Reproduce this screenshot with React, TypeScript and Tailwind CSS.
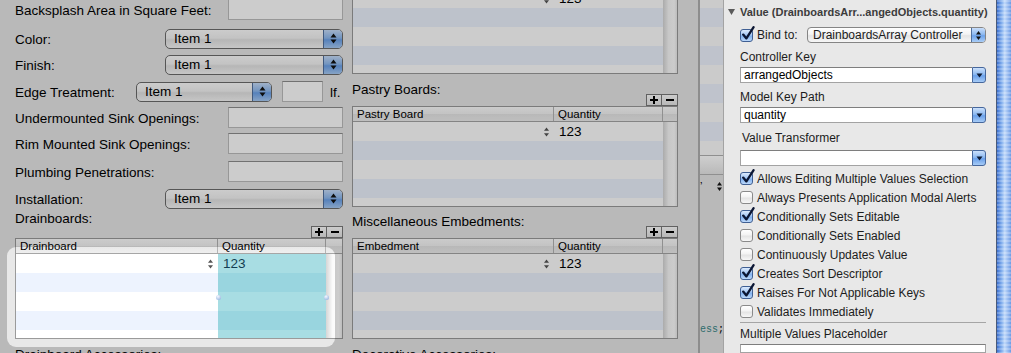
import React from "react";

const SANS = "font-['Liberation_Sans',Arial,sans-serif]";

function UpDown({ small = false }: { small?: boolean }) {
  if (small) {
    return (
      <svg width="5" height="9" viewBox="0 0 5 9">
        <path d="M2.5 0L5 3.5H0Z" fill="#111" />
        <path d="M2.5 9L5 5.5H0Z" fill="#111" />
      </svg>
    );
  }
  return (
    <svg width="7" height="11" viewBox="0 0 7 11">
      <path d="M3.5 0.5L6.5 4.5H0.5Z" fill="#111" />
      <path d="M3.5 10.5L6.5 6.5H0.5Z" fill="#111" />
    </svg>
  );
}

function Stepper() {
  return (
    <svg width="5" height="10" viewBox="0 0 5 10">
      <path d="M2.5 0.5L5 3.8H0Z" fill="#555" />
      <path d="M2.5 9.5L5 6.2H0Z" fill="#555" />
    </svg>
  );
}

function DownArrow() {
  return (
    <svg width="7" height="5" viewBox="0 0 7 5">
      <path d="M0.5 0.5H6.5L3.5 4.5Z" fill="#0d1a33" />
    </svg>
  );
}

function Popup({ width }: { width: string }) {
  return (
    <div
      className={`flex h-[20px] ${width} overflow-hidden rounded-[5px] border border-[#6c6c6c] bg-[linear-gradient(#ffffff,#f4f4f4_45%,#e4e4e4_55%,#f8f8f8)]`}
    >
      <span className="flex-1 pl-[8px] text-[13.5px] leading-[18px] text-black">Item 1</span>
      <span className="flex w-[19px] items-center justify-center border-l border-[#50709e] bg-[linear-gradient(#c8defb,#8fbaf0_45%,#6ca2ea_55%,#a9cdf7)]">
        <UpDown />
      </span>
    </div>
  );
}

function TextField({ width }: { width: string }) {
  return <div className={`${width} h-[21px] border border-[#bdbdbd] border-t-[#8e8e8e] bg-white`} />;
}

function Label({ children }: { children: React.ReactNode }) {
  return (
    <span className="whitespace-nowrap pt-[2px] text-[13.5px] leading-[16px] text-black">{children}</span>
  );
}

function PlusMinus() {
  return (
    <div className="flex h-[12px] self-end">
      <div className="flex w-[16px] items-center justify-center border border-[#7a7a7a] bg-[linear-gradient(#ffffff,#e6e6e6)]">
        <svg width="8" height="8" viewBox="0 0 8 8">
          <path d="M4 0V8M0 4H8" stroke="#000" strokeWidth="2" />
        </svg>
      </div>
      <div className="flex w-[16px] items-center justify-center border border-l-0 border-[#7a7a7a] bg-[linear-gradient(#ffffff,#e6e6e6)]">
        <svg width="8" height="2" viewBox="0 0 8 2">
          <path d="M0 1H8" stroke="#000" strokeWidth="2" />
        </svg>
      </div>
    </div>
  );
}

const ROWS = [0, 1, 2, 3, 4];

function Table({
  col1,
  w1,
  w2,
  selected = false,
  header = true,
}: {
  col1: string;
  w1: string;
  w2: string;
  selected?: boolean;
  header?: boolean;
}) {
  return (
    <div className={`flex flex-col border-x border-b border-[#9a9a9a] ${header ? "border-t" : ""}`}>
      {header && (
        <div className="flex h-[15px] border-b border-[#a6a6a6] bg-[linear-gradient(#ffffff,#f4f4f4_50%,#e7e7e7_51%,#efefef)] text-[11.5px] leading-[14px] text-black">
          <div className={`${w1} shrink-0 border-r border-[#b5b5b5] pl-[4px]`}>{col1}</div>
          <div className={`${w2} shrink-0 border-r border-[#b5b5b5] pl-[4px]`}>Quantity</div>
          <div className="flex-1" />
        </div>
      )}
      <div className="flex h-[84px]">
        <div className={`flex ${w1} shrink-0 flex-col`}>
          {ROWS.map((i) => (
            <div
              key={i}
              className={`flex items-center justify-end pr-[5px] ${i < 4 ? "h-[19px]" : "h-[8px]"} ${
                i % 2 === 0 ? "bg-white" : "bg-[#edf3fe]"
              }`}
            >
              {i === 0 && <Stepper />}
            </div>
          ))}
        </div>
        <div className={`flex ${w2} shrink-0 flex-col`}>
          {ROWS.map((i) => (
            <div
              key={i}
              className={`pl-[5px] text-[13.5px] leading-[19px] ${i < 4 ? "h-[19px]" : "h-[8px]"} ${
                selected
                  ? i % 2 === 0
                    ? "bg-[#a8dde3] text-[#133d52]"
                    : "bg-[#99d5df]"
                  : i % 2 === 0
                  ? "bg-white text-black"
                  : "bg-[#edf3fe]"
              }`}
            >
              {i === 0 ? "123" : ""}
            </div>
          ))}
        </div>
        <div className="flex-1 bg-[linear-gradient(90deg,#d6d6d6,#fafafa_40%,#ffffff_80%,#ececec)]" />
      </div>
    </div>
  );
}

function LeftColumn() {
  return (
    <div className="flex w-[328px] shrink-0 flex-col">
      <div className="mt-[-1px] flex h-[21px] items-center justify-between">
        <Label>Backsplash Area in Square Feet:</Label>
        <TextField width="w-[115px]" />
      </div>
      <div className="mt-[8px] flex h-[21px] items-center justify-between">
        <Label>Color:</Label>
        <Popup width="w-[178px]" />
      </div>
      <div className="mt-[5px] flex h-[21px] items-center justify-between">
        <Label>Finish:</Label>
        <Popup width="w-[178px]" />
      </div>
      <div className="mt-[6px] flex h-[21px] items-center">
        <div className="w-[121px] shrink-0">
          <Label>Edge Treatment:</Label>
        </div>
        <Popup width="w-[136px]" />
        <div className="ml-[10px]">
          <TextField width="w-[41px]" />
        </div>
        <span className="ml-[7px] pt-[2px] text-[13.5px] leading-[16px] text-black">lf.</span>
      </div>
      <div className="mt-[5px] flex h-[21px] items-center justify-between">
        <Label>Undermounted Sink Openings:</Label>
        <TextField width="w-[115px]" />
      </div>
      <div className="mt-[5px] flex h-[21px] items-center justify-between">
        <Label>Rim Mounted Sink Openings:</Label>
        <TextField width="w-[115px]" />
      </div>
      <div className="mt-[7px] flex h-[21px] items-center justify-between">
        <Label>Plumbing Penetrations:</Label>
        <TextField width="w-[115px]" />
      </div>
      <div className="mt-[6px] flex h-[21px] items-center justify-between">
        <Label>Installation:</Label>
        <Popup width="w-[178px]" />
      </div>
      <div className="flex h-[29px] items-start justify-between">
        <span className="pt-[2px] text-[13.5px] leading-[16px] text-black">Drainboards:</span>
        <PlusMinus />
      </div>
      <Table col1="Drainboard" w1="w-[202px]" w2="w-[108px]" selected />
      <span className="mt-[8px] whitespace-nowrap text-[13.5px] leading-[16px] text-black">
        Drainboard Accessories:
      </span>
    </div>
  );
}

function MiddleColumn() {
  return (
    <div className="flex w-[326px] shrink-0 flex-col">
      <div className="mt-[-11px]">
        <Table col1="" w1="w-[201px]" w2="w-[109px]" header={false} />
      </div>
      <div className="flex h-[32px] items-start justify-between">
        <span className="pt-[8px] text-[13.5px] leading-[16px] text-black">Pastry Boards:</span>
        <PlusMinus />
      </div>
      <Table col1="Pastry Board" w1="w-[201px]" w2="w-[109px]" />
      <div className="flex h-[31px] items-start justify-between">
        <span className="pt-[7px] text-[13.5px] leading-[16px] text-black">Miscellaneous Embedments:</span>
        <PlusMinus />
      </div>
      <Table col1="Embedment" w1="w-[201px]" w2="w-[109px]" />
      <span className="mt-[8px] whitespace-nowrap text-[13.5px] leading-[16px] text-black">
        Decorative Accessories:
      </span>
    </div>
  );
}

function FormArea() {
  return (
    <div className="relative h-[353px] w-[698px] shrink-0 overflow-hidden bg-[#e8e8e8]">
      <div className="flex gap-[9px] pl-[15px]">
        <LeftColumn />
        <MiddleColumn />
      </div>
      <div className="pointer-events-none absolute left-[7px] top-[247px] h-[100px] w-[328px] rounded-[9px] shadow-[0_0_2px_1200px_rgba(0,0,0,0.2)]" />
      <div className="pointer-events-none absolute left-[216px] top-[295px] h-[5px] w-[5px] rounded-full bg-[radial-gradient(circle_at_40%_30%,#f4f8ff,#86a7da)]" />
      <div className="pointer-events-none absolute left-[324px] top-[295px] h-[5px] w-[5px] rounded-full bg-[radial-gradient(circle_at_40%_30%,#f4f8ff,#86a7da)]" />
    </div>
  );
}

const STRIPES = ["h-[8px]", "h-[19px]", "h-[19px]", "h-[19px]", "h-[19px]", "h-[19px]", "h-[19px]", "h-[19px]", "h-[14px]"];

function BackWindow() {
  return (
    <div className="flex w-[23px] shrink-0 flex-col overflow-hidden bg-[#b9b9b9]">
      {STRIPES.map((h, i) => (
        <div key={i} className={`${h} ${i % 2 === 0 ? "bg-[#cbcbcb]" : "bg-[#bfc3cc]"}`} />
      ))}
      <div className="h-[20px] border-y border-[#8f8f8f] bg-[linear-gradient(#cfcfcf,#b9b9b9)]" />
      <div className="flex h-[22px] items-center justify-between pr-[1px] text-[11px] leading-[12px] text-black">
        <span>’</span>
        <UpDown small />
      </div>
      <div className="flex-1" />
      <span className="whitespace-nowrap pb-[17px] font-['Liberation_Mono',monospace] text-[10px] leading-[12px] text-[#2f6d6d]">
        ess<span className="text-black">;</span>
      </span>
    </div>
  );
}

function Check({ on }: { on: boolean }) {
  return (
    <span
      className={`relative inline-block h-[13px] w-[13px] shrink-0 rounded-[3px] border ${
        on
          ? "border-[#3f5f93] bg-[linear-gradient(#dbeafd,#a6c8f4_45%,#80b1ef_55%,#bcd8fa)]"
          : "border-[#8a8a8a] bg-[linear-gradient(#ffffff,#f3f3f3_45%,#e4e4e4_55%,#f7f7f7)]"
      }`}
    >
      {on && (
        <svg className="absolute left-[0px] top-[-4px]" width="14" height="15" viewBox="0 0 14 15">
          <path d="M2.2 8.6L5.4 12.4L12.6 1.2" fill="none" stroke="#0b1633" strokeWidth="2.3" strokeLinecap="round" strokeLinejoin="round" />
        </svg>
      )}
    </span>
  );
}

function Combo({ text }: { text: string }) {
  return (
    <div className="flex h-[16px] w-full">
      <div className="flex-1 border border-r-0 border-[#a3a3a3] border-t-[#7e7e7e] bg-white pl-[3px] text-[12px] leading-[14px] text-black">
        {text}
      </div>
      <div className="flex w-[14px] items-center justify-center rounded-r-[3px] border border-[#46679c] bg-[linear-gradient(#cbe0fb,#8ebaf1_45%,#6aa0ea_55%,#a6cbf6)]">
        <DownArrow />
      </div>
    </div>
  );
}

const OPTIONS: [string, boolean][] = [
  ["Allows Editing Multiple Values Selection", true],
  ["Always Presents Application Modal Alerts", false],
  ["Conditionally Sets Editable", true],
  ["Conditionally Sets Enabled", false],
  ["Continuously Updates Value", false],
  ["Creates Sort Descriptor", true],
  ["Raises For Not Applicable Keys", true],
  ["Validates Immediately", false],
];

function Inspector() {
  return (
    <div className="flex w-[273px] shrink-0 flex-col border-l border-[#a3a3a3] bg-[#e8e8e8] pl-[16px] pr-[10px] pt-[4px] text-[12px] leading-[16px] text-[#1c1c1c]">
      <div className="ml-[-12px] flex h-[16px] items-center">
        <svg className="mr-[5px] shrink-0" width="7" height="6" viewBox="0 0 7 6">
          <path d="M0 0H7L3.5 6Z" fill="#5a5a5a" />
        </svg>
        <span className="whitespace-nowrap text-[11px] font-bold text-[#3c3c3c]">
          Value (DrainboardsArr...angedObjects.quantity)
        </span>
      </div>
      <div className="mt-[7px] flex h-[16px] items-center justify-between">
        <div className="flex items-center gap-[4px]">
          <Check on />
          <span>Bind to:</span>
        </div>
        <div className="flex h-[16px] w-[179px] overflow-hidden rounded-[4px] border border-[#858585] bg-[linear-gradient(#ffffff,#f3f3f3_45%,#e4e4e4_55%,#f7f7f7)]">
          <span className="flex-1 whitespace-nowrap pl-[5px] text-[12px] leading-[14px]">DrainboardsArray Controller</span>
          <span className="flex w-[14px] items-center justify-center border-l border-[#50709e] bg-[linear-gradient(#c8defb,#8fbaf0_45%,#6ca2ea_55%,#a9cdf7)]">
            <UpDown small />
          </span>
        </div>
      </div>
      <span className="mt-[6px] h-[16px]">Controller Key</span>
      <div className="mt-[2px]">
        <Combo text="arrangedObjects" />
      </div>
      <span className="mt-[6px] h-[16px]">Model Key Path</span>
      <div className="mt-[2px]">
        <Combo text="quantity" />
      </div>
      <span className="mt-[7px] h-[16px] pl-[2px]">Value Transformer</span>
      <div className="mt-[4px]">
        <Combo text="" />
      </div>
      <div className="mt-[3px] flex flex-col">
        {OPTIONS.map(([label, on]) => (
          <div key={label} className="flex h-[19px] items-center gap-[4px] whitespace-nowrap">
            <Check on={on} />
            <span>{label}</span>
          </div>
        ))}
      </div>
      <div className="mt-[1px] h-px bg-[#a5a5a5]" />
      <span className="mt-[4px] h-[16px]">Multiple Values Placeholder</span>
      <div className="mt-[2px] h-[22px] border border-[#a3a3a3] border-t-[#7e7e7e] bg-white" />
    </div>
  );
}

function BlueScroller() {
  return (
    <div className="w-[15px] shrink-0 border-l border-[#4a5a78] bg-[repeating-linear-gradient(180deg,rgba(255,255,255,0.22)_0px,rgba(255,255,255,0.22)_2px,rgba(255,255,255,0)_2px,rgba(255,255,255,0)_4px),linear-gradient(90deg,#3c70cf,#86b2ef_35%,#c0d9fa_55%,#6d9be5)]" />
  );
}

export default function App() {
  return (
    <div className={`flex h-[353px] w-[1011px] overflow-hidden bg-[#b9b9b9] ${SANS}`}>
      <FormArea />
      <div className="w-[2px] shrink-0 bg-[#8d8d8d]" />
      <BackWindow />
      <Inspector />
      <BlueScroller />
    </div>
  );
}
